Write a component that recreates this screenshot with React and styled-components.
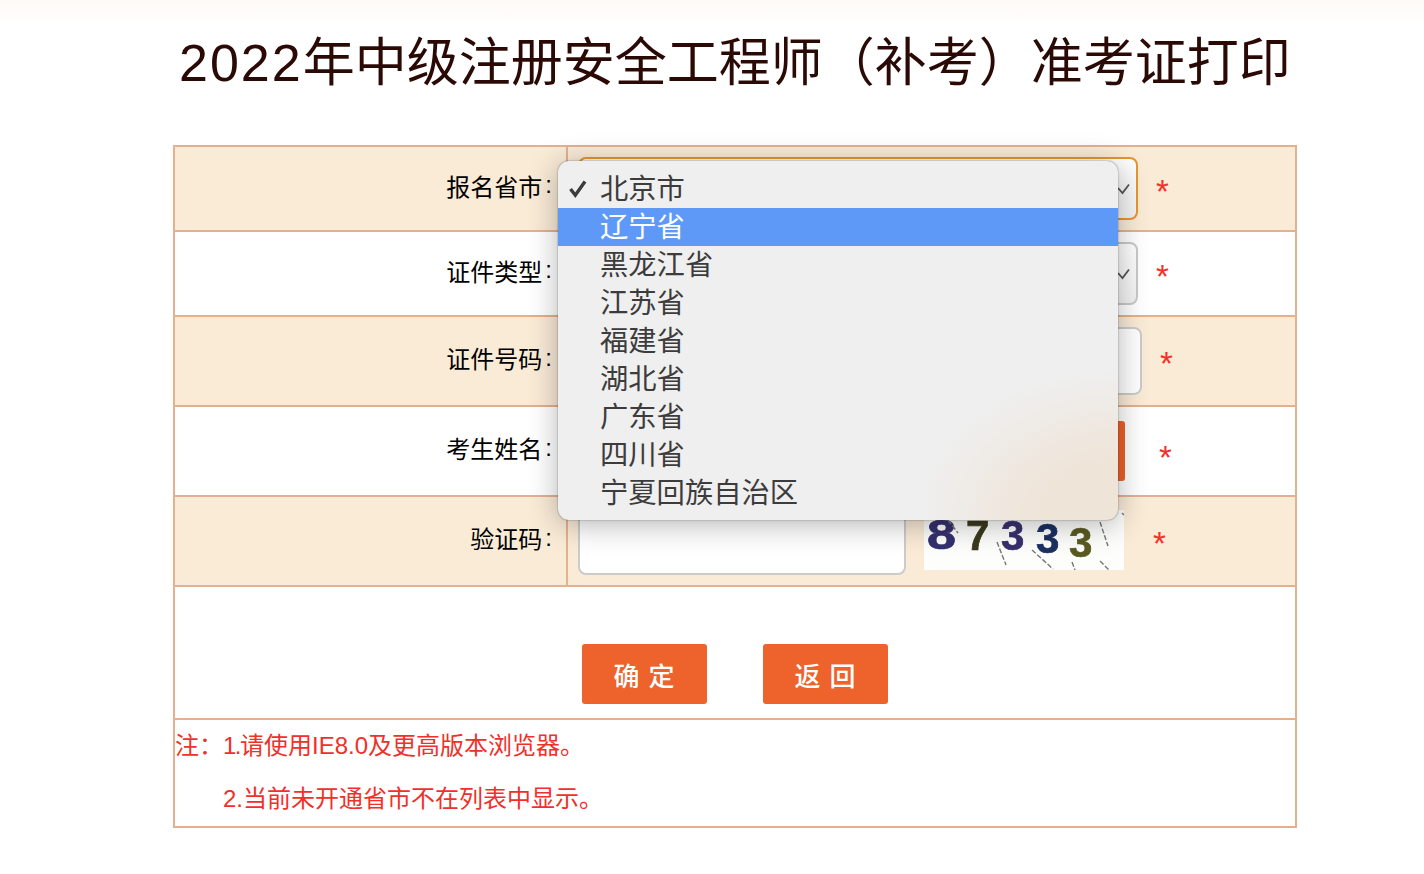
import React from "react";
import styled, { createGlobalStyle } from "styled-components";

const provinces = ["北京市", "辽宁省", "黑龙江省", "江苏省", "福建省", "湖北省", "广东省", "四川省", "宁夏回族自治区"];

const GlobalStyle = createGlobalStyle`
  html, body {
    margin: 0;
    padding: 0;
    background: #fff;
  }
  body {
    font-family: "Liberation Sans", "Noto Sans CJK SC", sans-serif;
  }
`;

const Page = styled.div`
  width: 1424px;
  height: 874px;
  overflow: hidden;
  position: relative;
  background: linear-gradient(#fefaf6, #fff 24px);
`;

const Title = styled.h1`
  margin: 0;
  height: 145px;
  padding: 32px 0 0 179px;
  box-sizing: border-box;
  font-size: 52px;
  line-height: 62px;
  font-weight: 400;
  color: #2b0a06;
  white-space: nowrap;
`;

const Year = styled.span`
  letter-spacing: 2px;
`;

const Table = styled.div`
  width: 1124px;
  margin-left: 173px;
  box-sizing: border-box;
  border: 2px solid #e5b08f;
  border-bottom: 0;
  position: relative;
`;

const Row = styled.div`
  display: flex;
  height: ${(p) => p.$height}px;
  background: ${(p) => (p.$shaded ? "#faebd7" : "#fff")};
  border-bottom: 2px solid #e5b08f;
`;

const Label = styled.div`
  width: 393px;
  box-sizing: border-box;
  padding: 0 14px 7px 0;
  display: flex;
  align-items: center;
  justify-content: flex-end;
  font-size: 24px;
  color: #000;
  border-right: 2px solid ${(p) => (p.$divider ? "#e5b08f" : "transparent")};
`;

const Colon = styled.span`
  padding-left: 3px;
`;

const Field = styled.div`
  flex: 1;
  display: flex;
  align-items: center;
  padding-left: 10px;
`;

const FakeSelect = styled.div`
  width: 560px;
  height: 63px;
  box-sizing: border-box;
  background: linear-gradient(#fff, #f2f2f2);
  border: 2px solid ${(p) => (p.$focus ? "#e8962e" : "#c9c9c9")};
  border-radius: 8px;
  display: flex;
  align-items: center;
  justify-content: flex-end;
  padding-right: 5px;
`;

const TextBox = styled.div`
  width: ${(p) => p.$width}px;
  height: 68px;
  box-sizing: border-box;
  background: #fff;
  border: 2px solid #cbcbcb;
  border-radius: 8px;
`;

const CodeButton = styled.div`
  width: 200px;
  height: 60px;
  margin-left: 18px;
  background: #ed632b;
  border-radius: 3px;
`;

const Captcha = styled.svg`
  width: 200px;
  height: 60px;
  margin: 0 0 2px 18px;
  display: block;
  background: #fdfdfb;
`;

const CaptchaDigits = styled.g`
  font-family: "Liberation Sans", sans-serif;
  font-weight: 700;
  font-size: 42px;
  stroke-width: 0.7px;
  filter: blur(0.6px);
`;

const Star = styled.span`
  margin: ${(p) => (p.$low ? "4px" : "0")} 0 ${(p) => (p.$low ? "0" : "4px")} ${(p) => p.$gap}px;
  font-size: 33px;
  line-height: 33px;
  height: 24px;
  color: #f5302a;
`;

const ButtonRow = styled.div`
  width: 100%;
  display: flex;
  gap: 56px;
  padding: 57px 0 0 407px;
`;

const Action = styled.button`
  width: 125px;
  height: 60px;
  border: 0;
  border-radius: 3px;
  background: #ed632b;
  color: #fff;
  font-family: inherit;
  font-size: 26px;
  font-weight: 500;
  letter-spacing: 1px;
  white-space: pre;
  padding: 0;
`;

const Notes = styled.div`
  width: 100%;
  margin-top: -1px;
  color: #f0302a;
  font-size: 24px;
  line-height: 53px;
`;

const NoteLine = styled.div`
  padding-left: ${(p) => p.$indent || 0}px;
  white-space: nowrap;
`;

const NoteNumber = styled.span`
  letter-spacing: -1.5px;
`;

const Popup = styled.div`
  position: absolute;
  left: 383px;
  top: 14px;
  width: 560px;
  box-sizing: border-box;
  padding: 9px 0 8px;
  border-radius: 11px;
  background:
    radial-gradient(ellipse 200px 150px at 100% 100%, #efe4d8 40%, rgba(239, 228, 216, 0) 100%),
    #efefef;
  box-shadow: 0 0 1.5px rgba(0, 0, 0, 0.6), 0 4px 30px rgba(0, 0, 0, 0.3);
`;

const Option = styled.div`
  height: 38px;
  box-sizing: border-box;
  padding: 1px 0 0 42px;
  font-size: 28.3px;
  line-height: 37px;
  color: ${(p) => (p.$active ? "#fff" : "#3c3c3c")};
  background: ${(p) => (p.$active ? "#5e99f8" : "transparent")};
  position: relative;
`;

const Tick = styled.svg`
  position: absolute;
  left: 10px;
  top: 9px;
  width: 20px;
  height: 20px;
`;

const Chevron = () => (
  <svg width="14" height="12" viewBox="0 0 14 12" fill="none" stroke="#555" strokeWidth="1.8">
    <path d="M1 5l4.5 5L12 1.5" />
  </svg>
);

const FieldLabel = ({ text, divider }) => (
  <Label $divider={divider}>
    {text}
    <Colon>:</Colon>
  </Label>
);

const App = () => (
  <Page>
    <GlobalStyle />
    <Title>
      <Year>2022</Year>年中级注册安全工程师（补考）准考证打印
    </Title>
    <Table>
      <Row $shaded $height={83}>
        <FieldLabel text="报名省市" divider />
        <Field>
          <FakeSelect $focus>
            <Chevron />
          </FakeSelect>
          <Star $gap={18}>*</Star>
        </Field>
      </Row>
      <Row $height={83}>
        <FieldLabel text="证件类型" />
        <Field>
          <FakeSelect>
            <Chevron />
          </FakeSelect>
          <Star $gap={18}>*</Star>
        </Field>
      </Row>
      <Row $shaded $height={88}>
        <FieldLabel text="证件号码" divider />
        <Field>
          <TextBox $width={564} />
          <Star $gap={18}>*</Star>
        </Field>
      </Row>
      <Row $height={88}>
        <FieldLabel text="考生姓名" />
        <Field>
          <TextBox $width={329} />
          <CodeButton />
          <Star $low $gap={34}>*</Star>
        </Field>
      </Row>
      <Row $shaded $height={88}>
        <FieldLabel text="验证码" divider />
        <Field>
          <TextBox $width={328} />
          <Captcha viewBox="0 0 200 60">
            <CaptchaDigits>
              <text x="3" y="39" fill="#35306e" stroke="#35306e" textLength="29" lengthAdjust="spacingAndGlyphs">8</text>
              <text x="42" y="40" fill="#3a3a1e" stroke="#3a3a1e">7</text>
              <text x="77" y="40" fill="#37306e" stroke="#37306e">3</text>
              <text x="112" y="43" fill="#1a3060" stroke="#1a3060">3</text>
              <text x="145" y="47" fill="#5a5a20" stroke="#5a5a20">3</text>
            </CaptchaDigits>
            <g stroke="#777" strokeWidth="1.4" strokeDasharray="5 2" fill="none">
              <path d="M24 10l10 13" />
              <path d="M73 32l9 23" />
              <path d="M108 40l21 19" />
              <path d="M148 52l3 8" />
              <path d="M176 12l8 24" />
              <path d="M176 51l9 9" />
              <path d="M198 3l2 2" />
            </g>
          </Captcha>
          <Star $gap={29}>*</Star>
        </Field>
      </Row>
      <Row $height={131}>
        <ButtonRow>
          <Action>{"确 定"}</Action>
          <Action>{"返 回"}</Action>
        </ButtonRow>
      </Row>
      <Row $height={106}>
        <Notes>
          <NoteLine>
            注：<NoteNumber>1.</NoteNumber>请使用IE8.0及更高版本浏览器。
          </NoteLine>
          <NoteLine $indent={48}>2.当前未开通省市不在列表中显示。</NoteLine>
        </Notes>
      </Row>
      <Popup>
        {provinces.map((name, i) => (
          <Option key={name} $active={i === 1}>
            {i === 0 && (
              <Tick viewBox="0 0 20 20">
                <path d="M2.5 10l4.8 6.2L17 2.5" fill="none" stroke="#3c3c3c" strokeWidth="3.4" />
              </Tick>
            )}
            {name}
          </Option>
        ))}
      </Popup>
    </Table>
  </Page>
);

export default App;
